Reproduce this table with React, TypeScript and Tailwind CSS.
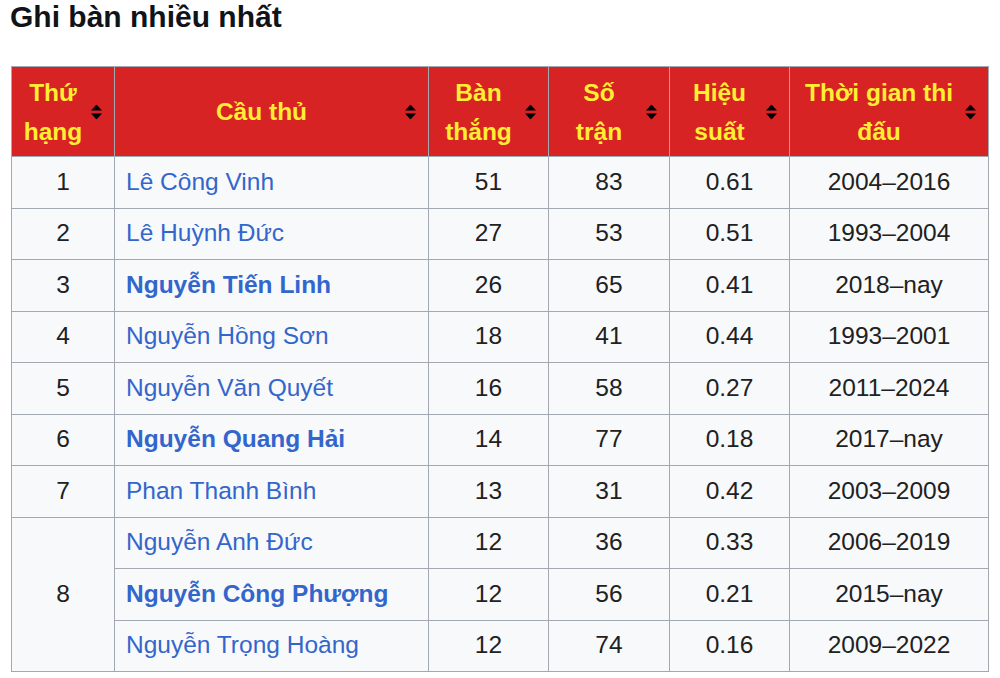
import React from 'react';

interface Row {
  rank?: number;
  span?: number;
  name: string;
  bold?: boolean;
  goals: number;
  caps: number;
  ratio: string;
  years: string;
}

const rows: Row[] = [
  { rank: 1, name: 'Lê Công Vinh', goals: 51, caps: 83, ratio: '0.61', years: '2004–2016' },
  { rank: 2, name: 'Lê Huỳnh Đức', goals: 27, caps: 53, ratio: '0.51', years: '1993–2004' },
  { rank: 3, name: 'Nguyễn Tiến Linh', bold: true, goals: 26, caps: 65, ratio: '0.41', years: '2018–nay' },
  { rank: 4, name: 'Nguyễn Hồng Sơn', goals: 18, caps: 41, ratio: '0.44', years: '1993–2001' },
  { rank: 5, name: 'Nguyễn Văn Quyết', goals: 16, caps: 58, ratio: '0.27', years: '2011–2024' },
  { rank: 6, name: 'Nguyễn Quang Hải', bold: true, goals: 14, caps: 77, ratio: '0.18', years: '2017–nay' },
  { rank: 7, name: 'Phan Thanh Bình', goals: 13, caps: 31, ratio: '0.42', years: '2003–2009' },
  { rank: 8, span: 3, name: 'Nguyễn Anh Đức', goals: 12, caps: 36, ratio: '0.33', years: '2006–2019' },
  { name: 'Nguyễn Công Phượng', bold: true, goals: 12, caps: 56, ratio: '0.21', years: '2015–nay' },
  { name: 'Nguyễn Trọng Hoàng', goals: 12, caps: 74, ratio: '0.16', years: '2009–2022' },
];

const SortIcon = () => (
  <svg width="11" height="15" viewBox="0 0 11 15" className="absolute right-[12px] top-1/2 -translate-y-1/2">
    <path d="M5.5 0 L11 6 H0 Z" fill="#000" />
    <path d="M0 9 H11 L5.5 15 Z" fill="#000" />
  </svg>
);

const Th: React.FC<{ w: string; children: React.ReactNode }> = ({ w, children }) => (
  <th className={`${w} relative border border-[#a2a9b1] bg-[#d72323] text-[#ffee33] font-bold text-[24.5px] leading-[39px] pl-[10px] pr-[30px] text-center`}>
    {children}
    <SortIcon />
  </th>
);

const td = 'border border-[#a2a9b1] bg-[#f8f9fa] text-[#202122] text-[24.5px] h-[51.5px] text-center px-[10px]';

export default function App() {
  return (
    <div className="bg-white w-[1000px] h-[678px] overflow-hidden pl-[11px] pt-[0px]" style={{ fontFamily: '"Liberation Sans", Arial, sans-serif' }}>
      <h2 className="text-[30px] font-bold text-[#101418] leading-[34px] ml-[-1px]">Ghi bàn nhiều nhất</h2>
      <table className="border-collapse mt-[32px] w-[977px] table-fixed">
        <thead>
          <tr className="h-[90px]">
            <Th w="w-[103px]">Thứ hạng</Th>
            <Th w="w-[314px]">Cầu thủ</Th>
            <Th w="w-[120px]">Bàn thắng</Th>
            <Th w="w-[121px]">Số trận</Th>
            <Th w="w-[120px]">Hiệu suất</Th>
            <Th w="w-[199px]">Thời gian thi đấu</Th>
          </tr>
        </thead>
        <tbody>
          {rows.map((r, i) => (
            <tr key={i}>
              {r.rank !== undefined && (
                <td className={td} rowSpan={r.span ?? 1}>{r.rank}</td>
              )}
              <td className={`${td} !text-left !text-[#3366cc] pl-[11px] ${r.bold ? 'font-bold' : ''}`}>{r.name}</td>
              <td className={td}>{r.goals}</td>
              <td className={td}>{r.caps}</td>
              <td className={td}>{r.ratio}</td>
              <td className={td}>{r.years}</td>
            </tr>
          ))}
        </tbody>
      </table>
    </div>
  );
}
